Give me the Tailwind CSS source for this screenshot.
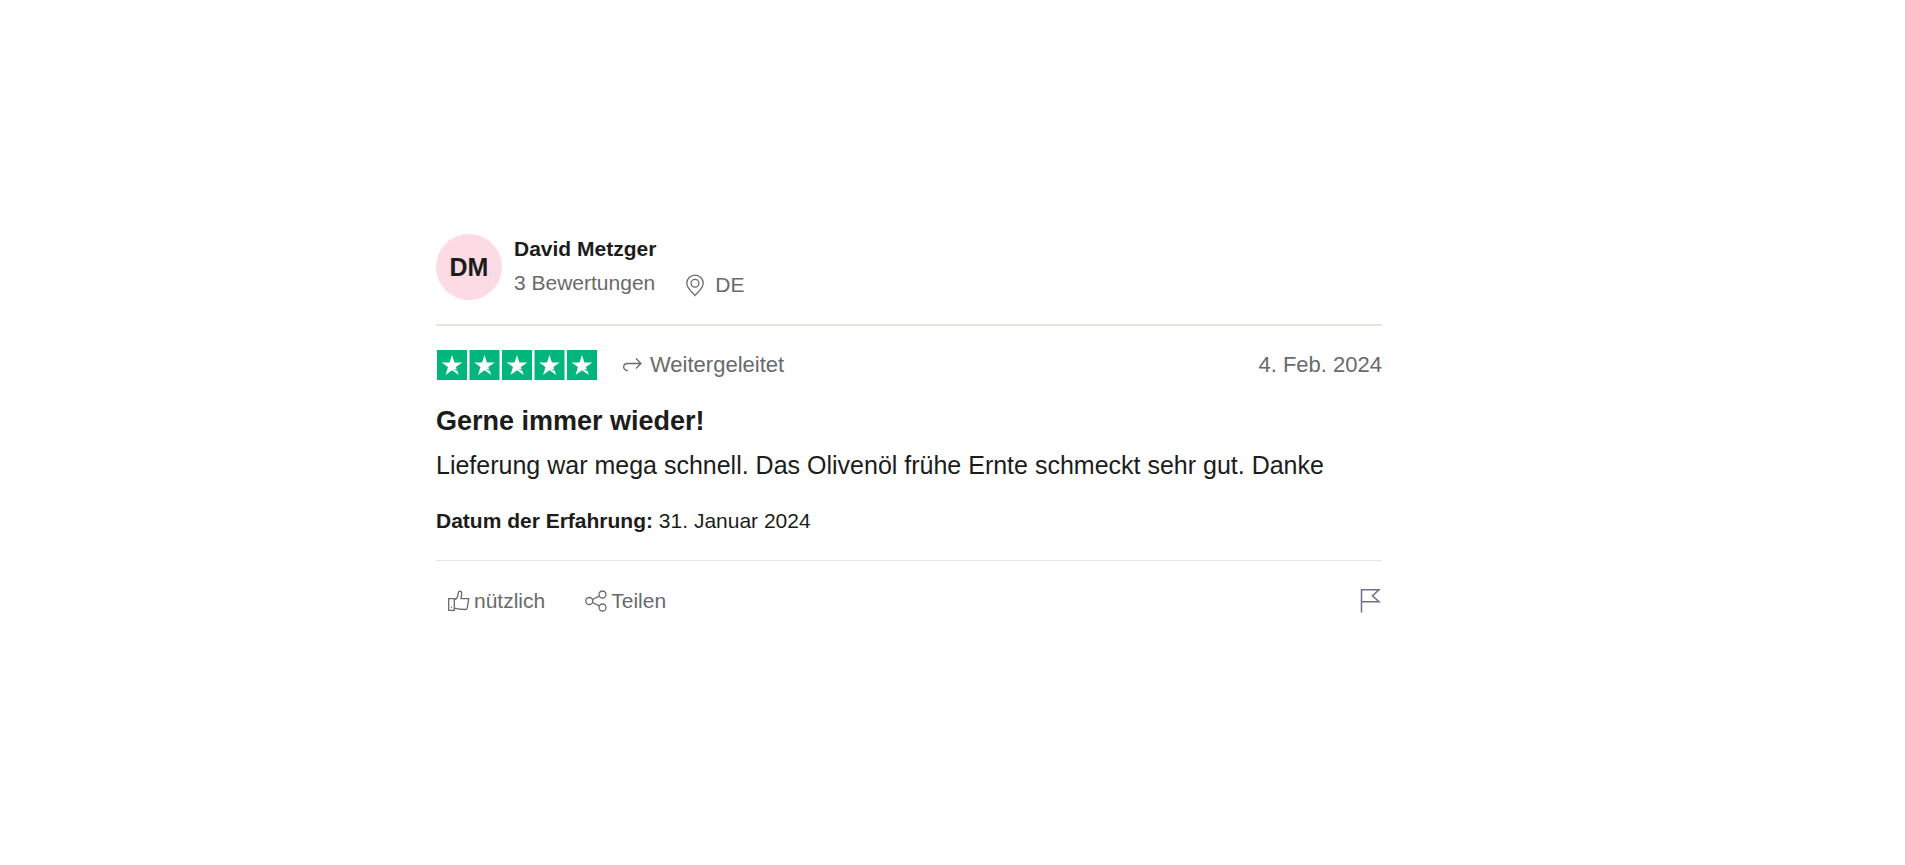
<!DOCTYPE html>
<html lang="de">
    <head>
        <meta charset="UTF-8">
        <meta name="viewport" content="width=device-width, initial-scale=1.0">
        <title>Bewertung von David Metzger</title>
        <script src="https://cdn.jsdelivr.net/npm/@tailwindcss/browser@4"></script>
    </head>
    <body class="bg-white font-['Liberation_Sans',Arial,sans-serif] text-[21px] leading-8 text-[#1c1c1c]">

        <main class="pl-[436px] pt-[233px] pr-8">
            <article class="max-w-[946px]">

                <!-- Reviewer -->
                <header class="flex items-center gap-3 border-b-2 border-[#e5e5dd] pb-[23px]">
                    <div class="flex size-[66px] shrink-0 items-center justify-center rounded-full bg-[#fddbe5] text-[25px] font-bold">DM</div>
                    <div>
                        <a href="#" class="block font-bold">David Metzger</a>
                        <div class="flex items-center gap-7 text-[#696a6a]">
                            <span>3 Bewertungen</span>
                            <span class="flex items-center gap-2 pt-1">
                                <svg class="size-6" viewBox="0 0 24 24" fill="none" stroke="currentColor" stroke-width="1.3" aria-hidden="true">
                                    <path d="M12 22.500C10 19.600 3.800 16 3.800 10.300a8.200 8.200 0 0 1 16.400 0c0 5.700-6.200 9.300-8.200 12.200z"/>
                                    <circle cx="12" cy="10.200" r="3.900"/>
                                </svg>
                                DE
                            </span>
                        </div>
                    </div>
                </header>

                <!-- Rating -->
                <div class="flex items-center pt-[23px]">
                    <svg class="h-[30px] w-[162px]" viewBox="0 0 162 30" role="img" aria-label="5 von 5 Sternen">
                        <defs>
                            <g id="star">
                                <rect width="30" height="30" fill="#00b67a"/>
                                <path fill="#fff" d="M15 5l2.400 7.500h7.900l-6.400 4.600 2.900 8L15 20.200l-6.500 4.800 2.500-7.900-6.400-4.600h7.900z"/>
                                <path fill="#00b67a" d="M20.200 18.900l-4.200 1.100 4.400.5z"/>
                            </g>
                        </defs>
                        <use href="#star" x="1"/>
                        <use href="#star" x="33.500"/>
                        <use href="#star" x="66"/>
                        <use href="#star" x="98.500"/>
                        <use href="#star" x="131"/>
                    </svg>
                    <div class="ml-6 flex items-center gap-2 text-[22px] text-[#696a6a]">
                        <svg class="h-5 w-5" viewBox="0 0 20 20" fill="none" stroke="currentColor" stroke-width="1.300" aria-hidden="true">
                            <path d="M5.800 15.500C.3 15.500.3 8.500 5.800 8.500H19M14 3.500l5 5-5 5"/>
                        </svg>
                        Weitergeleitet
                    </div>
                    <time datetime="2024-02-04" class="ml-auto text-[22px] text-[#696a6a]">4. Feb. 2024</time>
                </div>

                <!-- Review text -->
                <h2 class="mt-6 text-[27px] font-bold">Gerne immer wieder!</h2>
                <p class="mt-3 text-[25px] leading-8">Lieferung war mega schnell. Das Olivenöl frühe Ernte schmeckt sehr gut. Danke</p>
                <p class="mt-6"><b>Datum der Erfahrung:</b> 31. Januar 2024</p>

                <!-- Actions -->
                <footer class="mt-[23px] flex items-center gap-10 border-t border-[#e5e5dd] pt-6 pl-3 text-[#696a6a]">
                    <button type="button" class="flex items-center gap-1">
                        <svg class="size-[22px]" viewBox="0 0 22 22" fill="none" stroke="currentColor" stroke-width="1.300" aria-hidden="true">
                            <path d="M.7 8.700h5.600v11.600H.7zM6.300 9.700c2.200-.7 3.400-2.500 3.700-4.900.2-2.300.4-3.600 1.700-3.600 1.500 0 2.200 1.200 2 2.700l-.7 4.800h7.700l-1.400 9.200c-.2 1.100-.9 1.600-2 1.600-4 0-7-.3-11-1.300M3 17.300h1"/>
                        </svg>
                        nützlich
                    </button>
                    <button type="button" class="flex items-center gap-1">
                        <svg class="size-[22px]" viewBox="0 0 22 22" fill="none" stroke="currentColor" stroke-width="1.300" aria-hidden="true">
                            <circle cx="4.300" cy="11" r="3.500"/>
                            <circle cx="17.500" cy="4.500" r="3.500"/>
                            <circle cx="17.500" cy="17.500" r="3.500"/>
                            <path d="M7.500 9.500l6.800-3.400M7.500 12.500l6.800 3.400"/>
                        </svg>
                        Teilen
                    </button>
                    <button type="button" aria-label="Bewertung melden" class="ml-auto text-[#6e6e8c]">
                        <svg class="h-6 w-[22px]" viewBox="0 0 22 24" fill="none" stroke="currentColor" stroke-width="1.500" aria-hidden="true">
                            <path d="M1.500 23.500V.8h17.500l-6.500 6 6.500 6H1.500"/>
                        </svg>
                    </button>
                </footer>

            </article>
        </main>

    </body>
</html>
